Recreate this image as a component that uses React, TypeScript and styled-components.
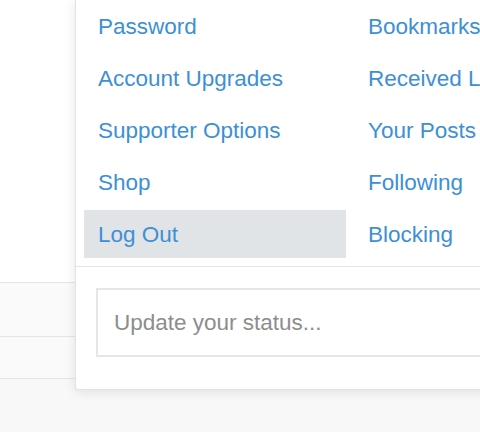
import * as React from 'react'
import styled, { createGlobalStyle } from 'styled-components'

const GlobalStyle = createGlobalStyle`
  html, body {
    margin: 0;
    padding: 0;
    background: #f8f8f8;
    overflow: hidden;
    font-family: 'Liberation Sans', Arial, Helvetica, sans-serif;
  }
`

const Page = styled.div`
  position: relative;
  width: 480px;
  height: 432px;
  overflow: hidden;
  background: #f8f8f8;
`

const Header = styled.div`
  height: 282px;
  background: #fff;
  border-bottom: 1px solid #e3e5e8;
`

const BackRow = styled.div<{ $h: number }>`
  height: ${(p) => p.$h}px;
  background: #fafafa;
  border-bottom: 1px solid #e3e5e8;
`

const Menu = styled.div`
  position: absolute;
  top: 0;
  left: 75px;
  width: 560px;
  height: 389px;
  background: #fff;
  border: 1px solid #dfe2e6;
  border-top: none;
  border-radius: 0 0 4px 4px;
  box-shadow: 0 2px 12px rgba(0, 0, 0, 0.1);
  display: flex;
  flex-direction: column;
`

const LinkGrid = styled.div`
  display: grid;
  grid-template-columns: 262px 262px;
  column-gap: 8px;
  row-gap: 4px;
  padding: 2px 8px 8px;
  grid-auto-flow: column;
  grid-template-rows: repeat(5, 48px);
`

const LinkItem = styled.a<{ $active?: boolean }>`
  display: flex;
  align-items: center;
  padding: 1px 14px 0;
  font-size: 22.5px;
  line-height: 26px;
  color: #3d8fd6;
  text-decoration: none;
  white-space: nowrap;
  background: ${(p) => (p.$active ? '#e1e4e7' : 'transparent')};
  cursor: pointer;
`

const Divider = styled.div`
  height: 1px;
  background: #e2e5e8;
`

const StatusArea = styled.div`
  padding: 21px 20px 0;
`

const StatusInput = styled.textarea`
  display: block;
  box-sizing: border-box;
  width: 100%;
  height: 69px;
  padding: 20px 16px 0;
  border: 2px solid #e5e6e8;
  border-radius: 0;
  resize: none;
  outline: none;
  font-family: 'Liberation Sans', Arial, Helvetica, sans-serif;
  font-size: 22.5px;
  line-height: 26px;
  color: #333;
  &::placeholder {
    color: #8d8d8d;
  }
`

const left = ['Password', 'Account Upgrades', 'Supporter Options', 'Shop', 'Log Out']
const right = ['Bookmarks', 'Received Likes', 'Your Posts', 'Following', 'Blocking']

export default function App() {
  return (
    <Page>
      <GlobalStyle />
      <Header />
      <BackRow $h={53} />
      <BackRow $h={41} />
      <Menu>
        <LinkGrid>
          {left.map((l) => (
            <LinkItem key={l} $active={l === 'Log Out'}>
              {l}
            </LinkItem>
          ))}
          {right.map((l) => (
            <LinkItem key={l}>{l}</LinkItem>
          ))}
        </LinkGrid>
        <Divider />
        <StatusArea>
          <StatusInput placeholder="Update your status..." />
        </StatusArea>
      </Menu>
    </Page>
  )
}
